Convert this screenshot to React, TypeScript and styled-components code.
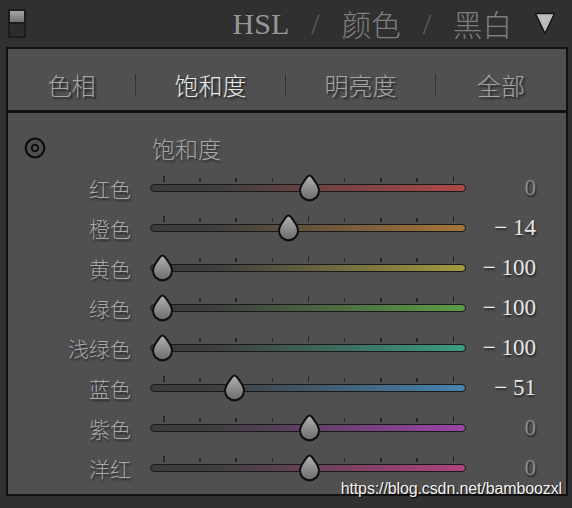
import React from 'react';
import styled, { createGlobalStyle } from 'styled-components';

const CJK = `"Noto Sans CJK SC", "Noto Sans", sans-serif`;
const SERIF = `"Liberation Serif", "Noto Sans CJK SC", serif`;

const GlobalStyle = createGlobalStyle`
  html, body { margin: 0; padding: 0; background: #303030; }
  body { width: 572px; height: 508px; overflow: hidden; }
`;

const Page = styled.div`
  position: relative;
  width: 572px;
  height: 508px;
  background: #303030;
  font-family: ${CJK};
`;

const Header = styled.header`
  display: flex;
  align-items: center;
  justify-content: space-between;
  height: 47px;
  padding: 0 16px 0 8px;
  box-sizing: border-box;
`;

const PanelSwitch = styled.div`
  width: 14px;
  height: 25px;
  border: 2px solid #1c1c1c;
  background: linear-gradient(#a4a4a4 0%, #727272 45%, #1c1c1c 45%, #1c1c1c 50%, #2c2c2c 50%, #2c2c2c 100%);
`;

const TitleGroup = styled.div`
  display: flex;
  align-items: center;
  gap: 22px;
`;

const TitleWord = styled.span<{ $serif?: boolean; $tone: string }>`
  font-family: ${(p) => (p.$serif ? SERIF : CJK)};
  font-size: ${(p) => (p.$serif ? '30px' : '29.5px')};
  font-weight: 300;
  line-height: 1;
  color: ${(p) => p.$tone};
`;

const Panel = styled.div`
  margin-left: 6px;
  width: 558px;
  border: 2px solid #111;
  background: #505050;
`;

const TabBar = styled.nav`
  display: grid;
  grid-template-columns: 127px 1px 149px 1px 149px 1px 1fr;
  align-items: center;
  height: 64px;
  padding-top: 11px;
  box-sizing: border-box;
  border-bottom: 3px solid #111;
`;

const Tab = styled.div<{ $active?: boolean }>`
  text-align: center;
  font-size: 24px;
  font-weight: 300;
  line-height: 30px;
  color: ${(p) => (p.$active ? '#e8e8e8' : '#a4a4a4')};
  text-shadow: 2px 2px 2px rgba(0, 0, 0, 0.6);
`;

const TabDivider = styled.div`
  width: 1px;
  height: 22px;
  background: #333;
`;

const Content = styled.section`
  display: grid;
  grid-template-columns: 123px 316px 51px;
  grid-auto-rows: 40px;
  column-gap: 19px;
  align-items: center;
  padding: 15px 0 6px;
`;

const TargetIcon = styled.svg`
  justify-self: start;
  margin-left: 15px;
`;

const SectionTitle = styled.div`
  font-size: 23px;
  font-weight: 300;
  color: #a6a6a6;
  text-shadow: 1px 2px 2px rgba(0, 0, 0, 0.45);
  padding-left: 2px;
`;

const Label = styled.div`
  justify-self: end;
  font-size: 21px;
  font-weight: 300;
  line-height: 1;
  color: #a8a8a8;
  text-shadow: 1px 2px 2px rgba(0, 0, 0, 0.55);
  white-space: nowrap;
`;

const Slider = styled.div`
  position: relative;
  height: 40px;
  display: flex;
  flex-direction: column;
  padding-top: 8px;
  box-sizing: border-box;
`;

const Ticks = styled.div`
  display: flex;
  justify-content: space-between;
  align-items: flex-end;
  height: 6px;
  margin: 0 12px 0 13px;
`;

const Tick = styled.span<{ $major?: boolean }>`
  width: 1.5px;
  height: ${(p) => (p.$major ? '6px' : '4px')};
  background: #262626;
`;

const Track = styled.div<{ $color: string }>`
  margin-top: 2px;
  height: 8px;
  box-sizing: border-box;
  border: 1.5px solid #1a1a1a;
  border-radius: 4px;
  background: linear-gradient(to right, #3a3a3a 0%, #3e3e3e 20%, ${(p) => p.$color} 100%);
`;

const Thumb = styled.svg`
  position: absolute;
  top: 6px;
`;

const Value = styled.div<{ $zero: boolean }>`
  justify-self: end;
  font-family: ${SERIF};
  font-size: 23px;
  line-height: 0.85;
  white-space: nowrap;
  color: ${(p) => (p.$zero ? '#8a8a8a' : '#e6e6e6')};
  text-shadow: 1px 2px 2px rgba(0, 0, 0, 0.55);
`;

const Watermark = styled.div`
  position: absolute;
  right: 10px;
  top: 480px;
  font-family: "Liberation Sans", Arial, sans-serif;
  font-size: 16px;
  line-height: 17px;
  letter-spacing: -0.12px;
  color: #f2f2f2;
  text-shadow: 1px 1px 1px rgba(0, 0, 0, 0.9);
`;

type Row = { label: string; value: number; color: string };

const rows: Row[] = [
  { label: '红色', value: 0, color: '#b04848' },
  { label: '橙色', value: -14, color: '#a8763a' },
  { label: '黄色', value: -100, color: '#a39a3e' },
  { label: '绿色', value: -100, color: '#5c9e46' },
  { label: '浅绿色', value: -100, color: '#3c9c82' },
  { label: '蓝色', value: -51, color: '#4684b0' },
  { label: '紫色', value: 0, color: '#9c44a8' },
  { label: '洋红', value: 0, color: '#b04480' },
];

const tabs = ['色相', '饱和度', '明亮度', '全部'];

function ThumbShape({ left }: { left: number }) {
  return (
    <Thumb width="23" height="28" viewBox="0 0 23 28" style={{ left }}>
      <defs>
        <linearGradient id="thumbFill" x1="0" y1="0" x2="0" y2="1">
          <stop offset="0%" stopColor="#b2b2b2" />
          <stop offset="100%" stopColor="#6a6a6a" />
        </linearGradient>
      </defs>
      <path
        d="M11.5 1.5 C13 1.5 14 3 15.5 5.2 C18 8.6 21 12 21 16.8 A9.5 9.5 0 0 1 2 16.8 C2 12 5 8.6 7.5 5.2 C9 3 10 1.5 11.5 1.5 Z"
        fill="url(#thumbFill)"
        stroke="#0e0e0e"
        strokeWidth="2"
      />
    </Thumb>
  );
}

function formatValue(v: number) {
  if (v === 0) return '0';
  return `${v < 0 ? '−' : '+'} ${Math.abs(v)}`;
}

export default function App() {
  return (
    <Page>
      <GlobalStyle />
      <Header>
        <PanelSwitch />
        <TitleGroup>
          <TitleWord $serif $tone="#979797">HSL</TitleWord>
          <TitleWord $serif $tone="#5c5c5c">/</TitleWord>
          <TitleWord $tone="#7e7e7e">颜色</TitleWord>
          <TitleWord $serif $tone="#5c5c5c">/</TitleWord>
          <TitleWord $tone="#7e7e7e">黑白</TitleWord>
          <svg width="22" height="23" viewBox="0 0 22 23">
            <path d="M1.5 1.5 L20.5 1.5 L11 21.5 Z" fill="#bdbdbd" stroke="#151515" strokeWidth="1.5" strokeLinejoin="round" />
          </svg>
        </TitleGroup>
      </Header>
      <Panel>
        <TabBar>
          {tabs.map((t, i) => (
            <React.Fragment key={t}>
              {i > 0 && <TabDivider />}
              <Tab $active={i === 1}>{t}</Tab>
            </React.Fragment>
          ))}
        </TabBar>
        <Content>
          <TargetIcon width="24" height="24" viewBox="0 0 24 24">
            <circle cx="12" cy="12" r="9.3" fill="none" stroke="#101010" strokeWidth="2.3" />
            <circle cx="12" cy="12" r="3.2" fill="none" stroke="#101010" strokeWidth="2" />
          </TargetIcon>
          <SectionTitle>饱和度</SectionTitle>
          <div />
          {rows.map((r) => (
            <React.Fragment key={r.label}>
              <Label>{r.label}</Label>
              <Slider>
                <Ticks>
                  {Array.from({ length: 9 }).map((_, i) => (
                    <Tick key={i} $major={i === 0 || i === 4 || i === 8} />
                  ))}
                </Ticks>
                <Track $color={r.color} />
                <ThumbShape left={159 + r.value * 1.47 - 11.5} />
              </Slider>
              <Value $zero={r.value === 0}>{formatValue(r.value)}</Value>
            </React.Fragment>
          ))}
        </Content>
      </Panel>
      <Watermark>https://blog.csdn.net/bamboozxl</Watermark>
    </Page>
  );
}
